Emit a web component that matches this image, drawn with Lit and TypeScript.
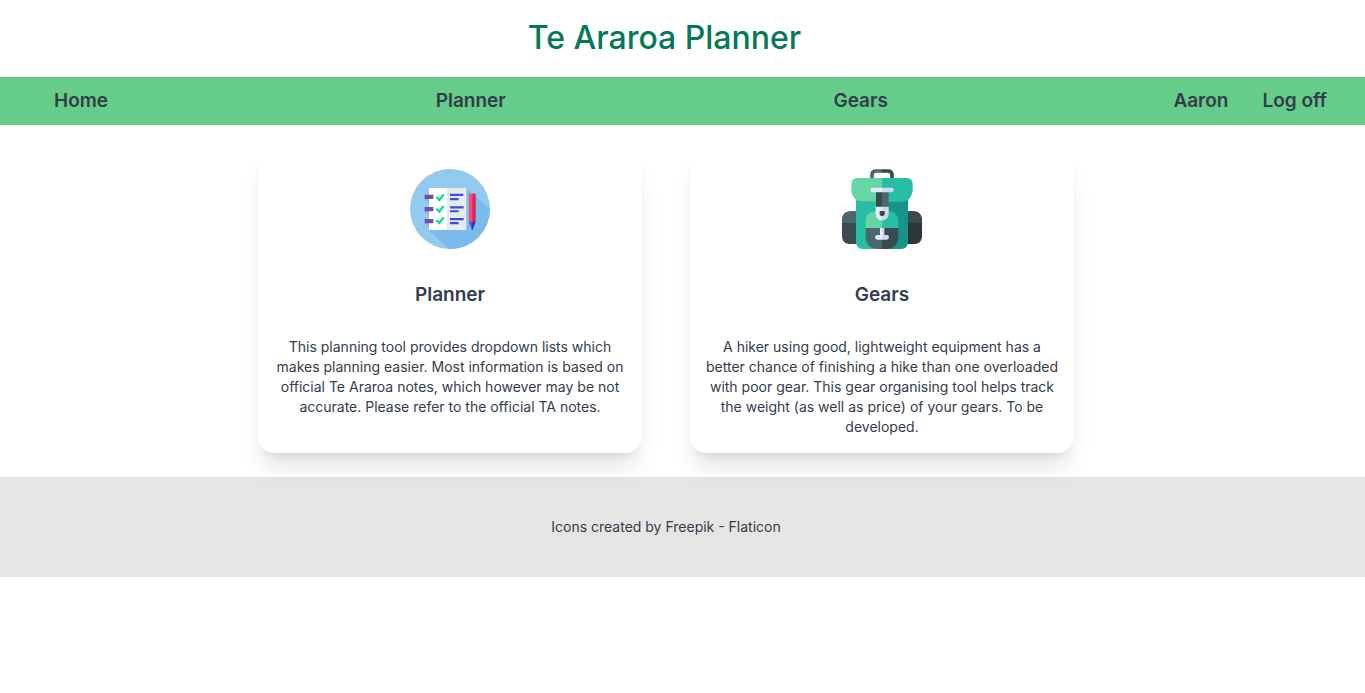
import { LitElement, html, css, svg } from "lit";
import { customElement, property } from "lit/decorators.js";

const plannerIcon = svg`
  <defs><clipPath id="disc"><circle cx="150" cy="147" r="120"/></clipPath></defs>
  <circle cx="150" cy="147" r="120" fill="#92c9ef"/>
  <g clip-path="url(#disc)">
    <path fill="#7abbeb" d="M199 84 L275 152 V270 H150 L87 209 H199Z"/>
    <path fill="#7abbeb" d="M87 209 L150 272 H250 V209Z"/>
    <path fill="#7abbeb" d="M74 117 L87 130 V117ZM74 153 L87 166 V153ZM74 190 L87 203 V190Z"/>
  </g>
  <path fill="#fff" d="M87 84H142V210H87Z"/>
  <path fill="#e6ebf0" d="M141 84H199V210H141Z"/>
  <path fill="#7849a6" d="M74 104H100V117H74ZM74 141H100V154H74ZM74 177H100V190H74Z"/>
  <g fill="none" stroke="#00df91" stroke-width="6.5">
    <path d="M109 111 L118 120 L131 103"/>
    <path d="M109 146 L118 155 L131 138"/>
    <path d="M109 180 L118 189 L131 172"/>
  </g>
  <path fill="#3d4bd6" d="M150 101.500H190V108H150ZM150 114H176V121H150ZM150 138.500H191V145.500H150ZM150 150.500H176V157H150ZM150 174H191V181H150ZM150 186H176V192.500H150Z"/>
  <path fill="#ff4878" d="M207 101H218V186H207Z"/>
  <path fill="#e01f55" d="M217 101H227V186H217Z"/>
  <path fill="#4156d8" d="M207 185H218V209H215Z"/>
  <path fill="#2636a8" d="M217 185H227L218 209H216Z"/>`;

const gearsIcon = svg`
  <path fill="none" stroke="#4c666d" stroke-width="11" d="M120 58V45Q120 33 132 33H150"/>
  <path fill="none" stroke="#3a4b4d" stroke-width="11" d="M150 33H168Q180 33 180 45V58"/>
  <path fill="#3a4b4d" d="M75 154H54Q30 156 30 181V230Q32 249 50 252H75Z"/>
  <path fill="#4c666d" d="M75 154H54Q30 156 30 189H75Z"/>
  <path fill="#2c3839" d="M225 154H246Q270 156 270 181V230Q268 249 250 252H225Z"/>
  <path fill="#3a4b4d" d="M225 154H246Q270 156 270 189H225Z"/>
  <path fill="#26bfa6" d="M72 115H150V267H92Q74 266 72 248Z"/>
  <path fill="#159487" d="M150 115H228V248Q226 266 208 267H150Z"/>
  <path fill="#159487" d="M73 120Q80 126 88 126H212Q221 126 227 120V115H73Z"/>
  <path fill="#65d7a6" d="M150 54H76Q58 55 58 73V92Q62 124 91 125H150Z"/>
  <path fill="#26bfa6" d="M150 54H224Q242 55 242 73V92Q238 124 209 125H150Z"/>
  <path fill="#65d7a6" d="M150 154H130Q103 155 101 181V205H150Z"/>
  <path fill="#26bfa6" d="M150 154H172Q197 155 199 181V205H150Z"/>
  <path fill="#4c666d" d="M101 204H150V267H136Q106 266 101 236Z"/>
  <path fill="#3a4b4d" d="M150 204H199V236Q194 266 164 267H150Z"/>
  <path fill="#3a4b4d" d="M132 95H151V143H132Z"/>
  <path fill="#4c666d" d="M150 95H170V143H150Z"/>
  <path fill="#e6ecfa" d="M122 83H151V97H122Q115 96 115 90Q115 84 122 83ZM131 140H151V182Q133 180 131 162Z"/>
  <path fill="#d0daf0" d="M150 83H179Q186 84 186 90Q186 96 179 97H150ZM150 140H170V162Q168 180 150 182Z"/>
  <path fill="#3a4b4d" d="M143 153H158V163Q157 168 150 169Q143 168 143 163Z"/>
  <path fill="#e6ecfa" d="M144 204H151V239H135Q129 238 129 232Q129 226 135 225H144Z"/>
  <path fill="#d0daf0" d="M150 204H157V225H165Q171 226 171 232Q171 238 165 239H150Z"/>`;

@customElement("feature-card")
class FeatureCard extends LitElement {
  @property() heading = "";
  @property() text = "";
  @property({ attribute: false }) icon: unknown;

  static styles = css`
    :host {
      display: flex;
      flex: 0 1 384px;
    }
    .card {
      position: relative;
      box-sizing: border-box;
      width: 100%;
      padding: 20px 16px 16px;
      border-radius: 16px;
      background: #fff;
      box-shadow: 0 20px 25px -5px rgba(0, 0, 0, 0.1), 0 8px 10px -6px rgba(0, 0, 0, 0.1);
      text-align: center;
    }
    .icon {
      display: block;
      width: 80px;
      height: 80px;
      margin: 0 auto 32px;
    }
    .heading {
      margin: 0 0 28px;
      font-size: 19px;
      line-height: 28px;
      font-weight: 600;
    }
    .text {
      margin: 0;
      font-size: 14px;
      line-height: 20px;
    }
  `;

  render() {
    return html`
      <article class="card">
        <svg class="icon" viewBox="30 27 240 240" aria-hidden="true">${this.icon}</svg>
        <h2 class="heading">${this.heading}</h2>
        <p class="text">${this.text}</p>
      </article>
    `;
  }
}

@customElement("app-root")
class AppRoot extends LitElement {
  static styles = css`
    :host {
      display: block;
      color: #333c4d;
      font-family: Inter, "Liberation Sans", sans-serif;
    }
    .title {
      margin: 0;
      padding: 18px 36px 19px 0;
      color: #047857;
      font-size: 32px;
      line-height: 40px;
      font-weight: 500;
      text-align: center;
    }
    .nav {
      display: flex;
      gap: 6px;
      padding: 0 22px 0 38px;
      background: #66cc8a;
    }
    .pages {
      display: flex;
      flex: 2 1 0;
      justify-content: space-between;
    }
    .account {
      display: flex;
      flex: 1 1 0;
      justify-content: flex-end;
      gap: 2px;
    }
    .link {
      padding: 10px 16px;
      color: inherit;
      font-size: 19px;
      line-height: 28px;
      font-weight: 600;
      text-decoration: none;
      white-space: nowrap;
    }
    .cards {
      display: flex;
      justify-content: center;
      gap: 48px;
      padding: 24px 33px 24px 0;
    }
    .footer {
      padding: 40px 33px 40px 0;
      background: #e5e5e5;
      font-size: 14px;
      line-height: 20px;
      text-align: center;
    }
    .credit {
      color: inherit;
      text-decoration: none;
    }
  `;

  render() {
    return html`
      <h1 class="title">Te Araroa Planner</h1>
      <nav class="nav">
        <div class="pages">
          <a class="link" href="#home">Home</a>
          <a class="link" href="#planner">Planner</a>
          <a class="link" href="#gears">Gears</a>
        </div>
        <div class="account">
          <a class="link" href="#profile">Aaron</a>
          <a class="link" href="#logoff">Log off</a>
        </div>
      </nav>
      <main class="cards">
        <feature-card
          heading="Planner"
          text="This planning tool provides dropdown lists which makes planning easier. Most information is based on official Te Araroa notes, which however may be not accurate. Please refer to the official TA notes."
          .icon=${plannerIcon}
        ></feature-card>
        <feature-card
          heading="Gears"
          text="A hiker using good, lightweight equipment has a better chance of finishing a hike than one overloaded with poor gear. This gear organising tool helps track the weight (as well as price) of your gears. To be developed."
          .icon=${gearsIcon}
        ></feature-card>
      </main>
      <footer class="footer">
        <a class="credit" href="#credits">Icons created by Freepik - Flaticon</a>
      </footer>
    `;
  }
}
